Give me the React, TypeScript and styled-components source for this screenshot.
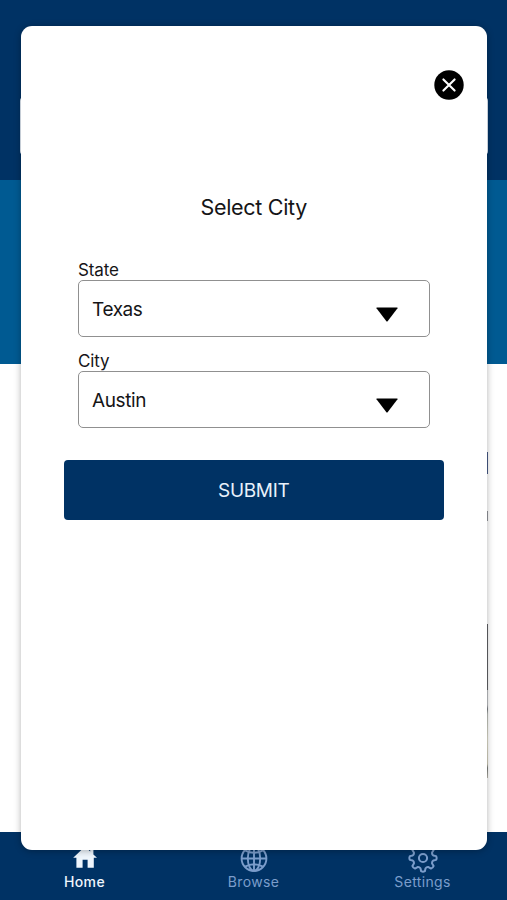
import React from "react";
import styled, { createGlobalStyle } from "styled-components";

const GlobalStyle = createGlobalStyle`
  *, *::before, *::after { box-sizing: border-box; }
  body { margin: 0; overflow: hidden; background: #fff; }
  button { font: inherit; border: 0; padding: 0; margin: 0; background: none; }
`;

const Screen = styled.div`
  position: relative;
  display: flex;
  flex-direction: column;
  height: 900px;
  max-width: 507px;
  overflow: hidden;
  background: #fff;
  color: #151517;
  font-family: Inter, "Liberation Sans", sans-serif;
`;

const Header = styled.header`
  height: 180px;
  padding: 97px 19.5px 0;
  background: #003264;
`;

const SearchCard = styled.div`
  height: 58px;
  border-radius: 4px;
  background: #e4edf7;
`;

const Hero = styled.div`
  height: 184px;
  background: #005a92;
`;

const Feed = styled.main`
  display: flex;
  flex: 1;
  flex-direction: column;
  align-items: flex-end;
  padding: 88px 19px 0 0;
`;

const FeedItem = styled.div<{ $height: number; $gap: number; $tone: string }>`
  width: 200px;
  height: ${(p) => p.$height}px;
  margin-bottom: ${(p) => p.$gap}px;
  background: ${(p) => p.$tone};
`;

const TabBar = styled.nav`
  display: grid;
  grid-template-columns: repeat(3, 1fr);
  height: 68px;
  background: #003264;
`;

const Tab = styled.button<{ $active?: boolean }>`
  display: flex;
  flex-direction: column;
  align-items: center;
  padding-top: 11px;
  color: ${(p) => (p.$active ? "#eff6fd" : "#7b9dcb")};
  font-size: 14px;
  font-weight: ${(p) => (p.$active ? 500 : 400)};
  line-height: 18px;
  letter-spacing: 0.35px;

  svg { display: block; }
`;

const Overlay = styled.div`
  position: absolute;
  inset: 26px 20.5px 50px 21px;
`;

const Dialog = styled.section`
  display: flex;
  flex-direction: column;
  height: 100%;
  padding: 44px 43px 0;
  border-radius: 11px;
  background: #fff;
  box-shadow: 0 1px 7px rgba(0, 0, 0, 0.3);
`;

const CloseButton = styled.button`
  align-self: flex-end;
  width: 30px;
  height: 30px;
  margin-right: -20.5px;

  svg { display: block; }
`;

const Title = styled.h1`
  margin: 94px 0 0;
  font-size: 21.5px;
  font-weight: 400;
  line-height: 26px;
  letter-spacing: -0.3px;
  text-align: center;
`;

const Fields = styled.div`
  display: flex;
  flex-direction: column;
  gap: 14px;
  padding: 40px 14px 0;
`;

const Field = styled.div`
  display: flex;
  flex-direction: column;
`;

const Label = styled.span`
  height: 20px;
  font-size: 17px;
  line-height: 20px;
  letter-spacing: -0.15px;
`;

const Select = styled.button`
  display: flex;
  align-items: center;
  justify-content: space-between;
  height: 57px;
  padding: 2px 31px 0 13px;
  border: 1.5px solid #909090;
  border-radius: 5px;
  color: #151517;
  font-size: 19px;
  letter-spacing: -0.4px;

  svg { margin-top: 9px; }
`;

const Submit = styled.button`
  height: 60px;
  padding-top: 1px;
  margin-top: 32px;
  border-radius: 4px;
  background: #003264;
  color: #e8f1fb;
  font-size: 19px;
  line-height: 59px;
  letter-spacing: -0.3px;
`;

const feed = [
  { height: 22, gap: 37, tone: "#465985" },
  { height: 10, gap: 103, tone: "#92949a" },
  { height: 66, gap: 0, tone: "#606266" },
  { height: 88, gap: 0, tone: "linear-gradient(#bcbfc2 0 15px, #777b80 19px, #b9bdb8 24px, #dedcca 50px, #cfcbb8 74px, #777a79 78px, #bbb8ac 88px)" },
];

const CloseIcon = () => (
  <svg width="30" height="30" viewBox="0 0 30 30">
    <circle cx="15" cy="15" r="14.7" fill="#000" />
    <path d="M9.4 9.4 20.6 20.6M20.6 9.4 9.4 20.6" stroke="#fff" strokeWidth="2.1" strokeLinecap="round" />
  </svg>
);

const CaretIcon = () => (
  <svg width="22" height="15" viewBox="0 0 22 15">
    <path d="M1 .5h20q1 0 .5.8L11.8 14q-.8 1-1.6 0L.5 1.3Q0 .5 1 .5Z" fill="#000" />
  </svg>
);

const HomeIcon = () => (
  <svg width="30" height="30" viewBox="0 0 30 30">
    <path d="M15 3.4 3.2 14.7h3.2v10h6.2v-7.9h5v7.9h6.2v-10H27l-3.6-3.3V5.5h-3.2v2.9Z" fill="currentColor" />
  </svg>
);

const GlobeIcon = () => (
  <svg width="30" height="30" viewBox="0 0 30 30" fill="none" stroke="currentColor" strokeWidth="1.9">
    <circle cx="15" cy="15.5" r="12.4" />
    <ellipse cx="15" cy="15.5" rx="6.2" ry="12.4" />
    <path d="M15 3.1v24.8M2.6 15.5h24.8M6 7.3q9 5 18 0M6 23.7q9-5 18 0" />
  </svg>
);

const toothPath = Array.from({ length: 8 }, (_, i) => {
  const point = (radius: number, degrees: number) => {
    const angle = ((i * 45 + degrees) * Math.PI) / 180;
    return `${(15 + radius * Math.cos(angle)).toFixed(2)} ${(15 + radius * Math.sin(angle)).toFixed(2)}`;
  };
  return `${i === 0 ? "M" : "L"}${point(10.6, -14)} L${point(13.3, -8)} Q${point(14.1, 0)} ${point(13.3, 8)} L${point(10.6, 14)} Q${point(9.5, 22.5)} ${point(10.6, 31)}`;
}).join(" ");

const GearIcon = () => (
  <svg width="30" height="30" viewBox="0 0 30 30" fill="none" stroke="currentColor" strokeWidth="2" strokeLinejoin="round">
    <path d={`${toothPath} Z`} />
    <circle cx="15" cy="15" r="4.1" />
  </svg>
);

const SelectField = ({ label, value }: { label: string; value: string }) => (
  <Field>
    <Label>{label}</Label>
    <Select type="button" aria-label={label}>
      <span>{value}</span>
      <CaretIcon />
    </Select>
  </Field>
);

export default function App() {
  return (
    <>
      <GlobalStyle />
      <Screen>
        <Header>
          <SearchCard />
        </Header>
        <Hero />
        <Feed>
          {feed.map((item, i) => (
            <FeedItem key={i} $height={item.height} $gap={item.gap} $tone={item.tone} />
          ))}
        </Feed>
        <TabBar>
          <Tab $active><HomeIcon />Home</Tab>
          <Tab><GlobeIcon />Browse</Tab>
          <Tab><GearIcon />Settings</Tab>
        </TabBar>
        <Overlay>
          <Dialog role="dialog" aria-label="Select City">
            <CloseButton type="button" aria-label="Close"><CloseIcon /></CloseButton>
            <Title>Select City</Title>
            <Fields>
              <SelectField label="State" value="Texas" />
              <SelectField label="City" value="Austin" />
            </Fields>
            <Submit type="button">SUBMIT</Submit>
          </Dialog>
        </Overlay>
      </Screen>
    </>
  );
}
